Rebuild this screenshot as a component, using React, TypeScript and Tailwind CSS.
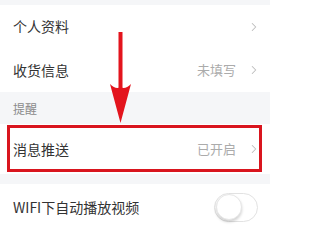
import { ChevronRight } from "lucide-react";

function Chevron() {
  return <ChevronRight className="w-[14px] h-[16px] text-[#bdbdbd]" strokeWidth={1.8} />;
}

function Row({ label, value, arrow = true }: { label: string; value?: string; arrow?: boolean }) {
  return (
    <div className="flex items-center justify-between h-full pl-[13px] pr-[9px]">
      <span className="text-[14px] text-[#333]">{label}</span>
      <div className="flex items-center gap-[11px]">
        {value && <span className="text-[13px] text-[#ababab]">{value}</span>}
        {arrow && <Chevron />}
      </div>
    </div>
  );
}

export default function App() {
  return (
    <div
      className="relative w-[270px] h-[227px] overflow-hidden bg-[#f5f6f8]"
      style={{ fontFamily: '"Noto Sans CJK SC", "Noto Sans", sans-serif' }}
    >
      <div className="h-[5px]" />
      <div className="bg-white">
        <div className="h-[43px]">
          <Row label="个人资料" />
        </div>
        <div className="h-[44px]">
          <Row label="收货信息" value="未填写" />
        </div>
      </div>
      <div className="h-[32px] flex items-end pb-[6px] pl-[13px]">
        <span className="text-[12px] text-[#8a8a8a]">提醒</span>
      </div>
      <div className="relative bg-white h-[50px]">
        <Row label="消息推送" value="已开启" />
        <div className="absolute left-[7px] top-[1px] w-[255px] h-[47px] border-[3px] border-[#d9151e]" />
      </div>
      <div className="h-[10px]" />
      <div className="bg-white h-[46px] flex items-center justify-between pl-[13px] pr-[12px]">
        <span className="text-[14px] text-[#333]">WIFI下自动播放视频</span>
        <div className="w-[44px] h-[29px] rounded-full border border-[#e2e2e2] bg-white flex items-center px-[1px]">
          <div className="w-[26px] h-[26px] rounded-full bg-white border border-[#e6e6e6] shadow-[0_2px_3px_rgba(0,0,0,0.18)]" />
        </div>
      </div>
      <svg className="absolute left-[108px] top-[32px]" width="25" height="92" viewBox="0 0 25 92">
        <rect x="10.5" y="0" width="4" height="56" fill="#e3141d" />
        <path d="M2 52 Q8 58 12.5 55 Q17 58 23 52 L12.5 91 Z" fill="#e3141d" />
      </svg>
    </div>
  );
}
